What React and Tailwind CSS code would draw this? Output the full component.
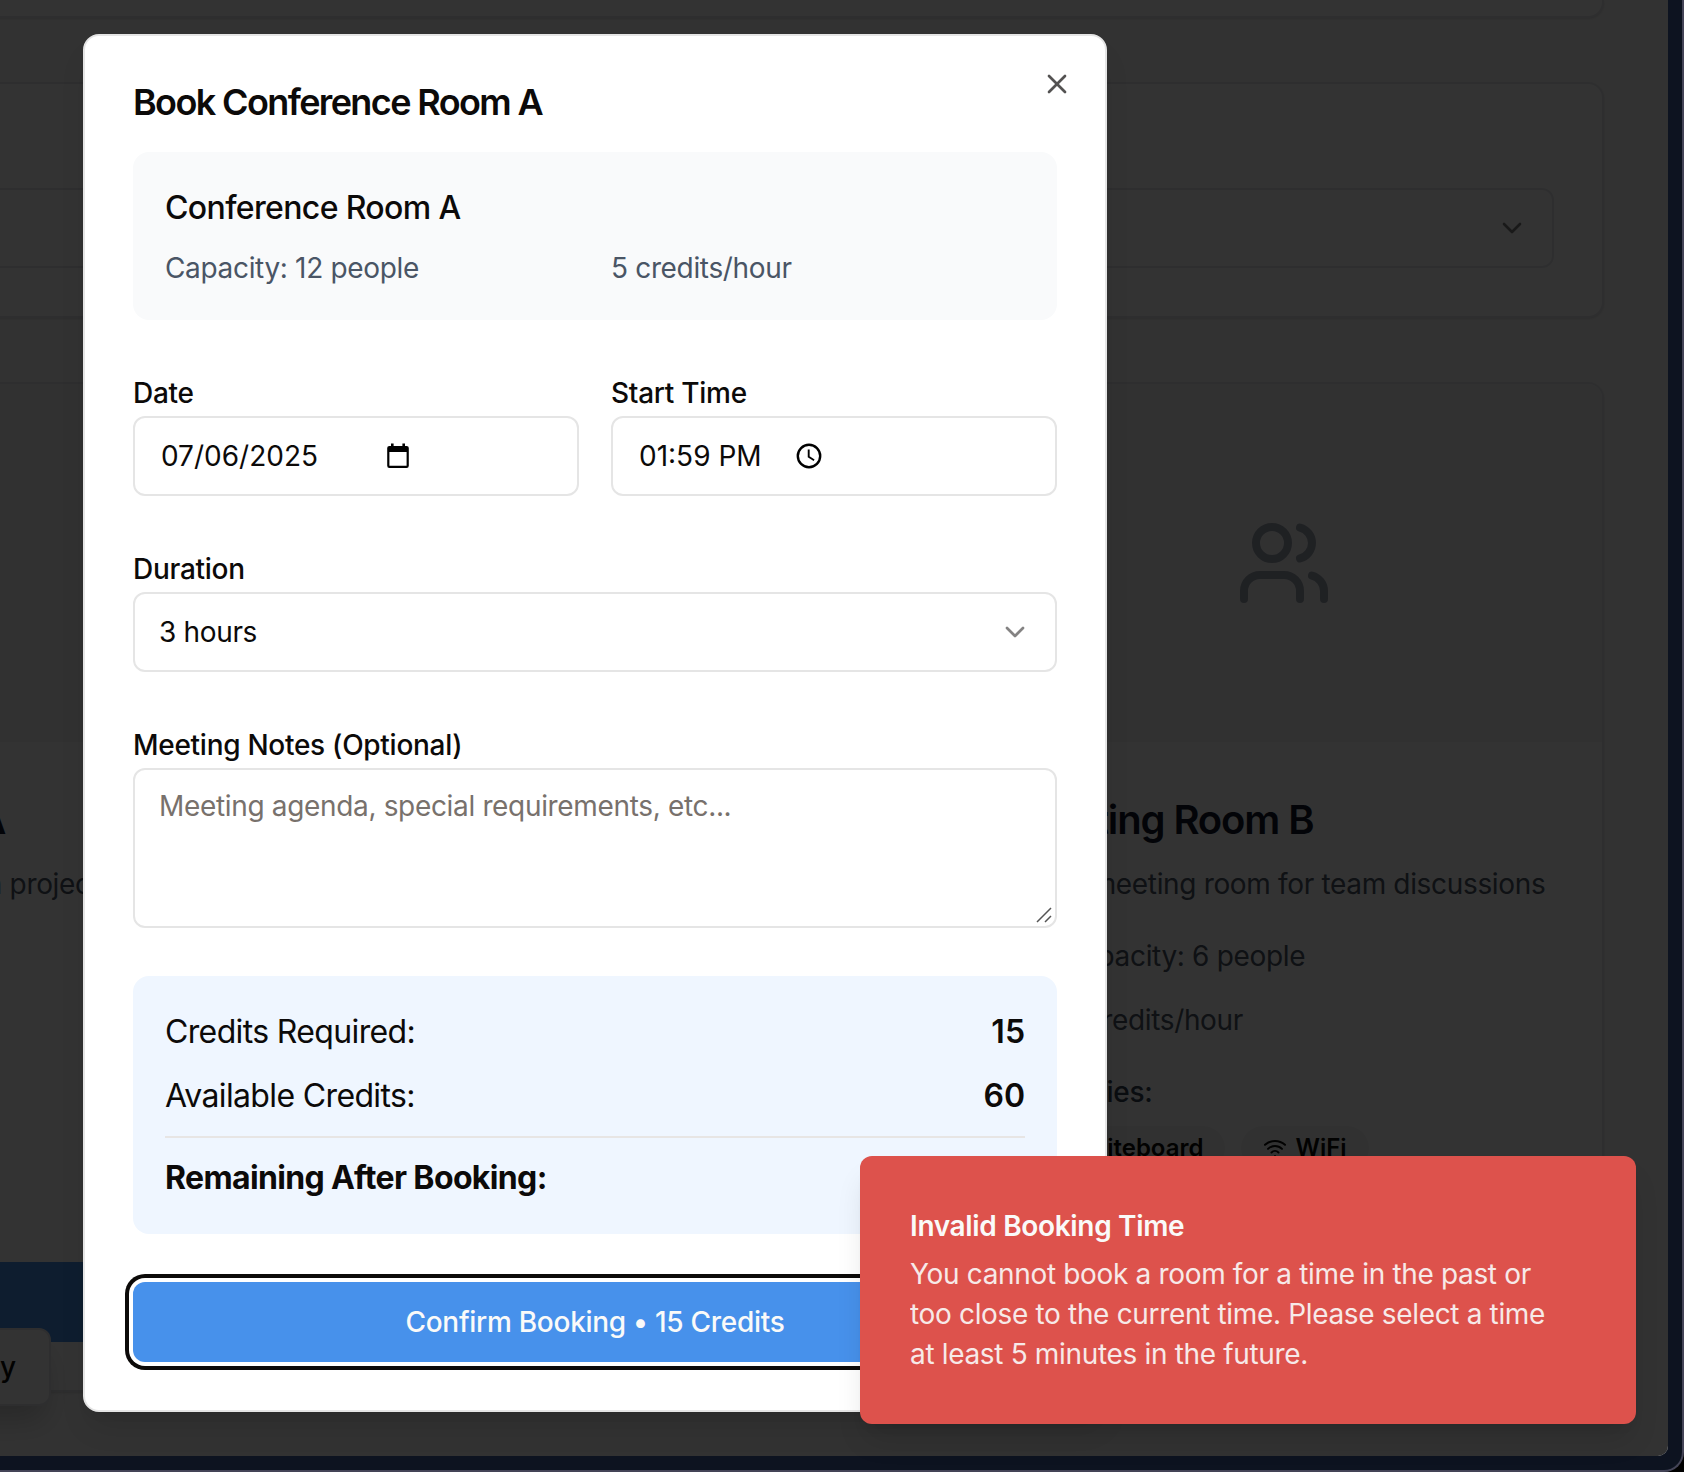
import React from "react";
import { ChevronDown, Coins, Presentation, Users, Wifi, X } from "lucide-react";

function CalendarIcon() {
  return (
    <svg width="28" height="28" viewBox="0 0 28 28" className="text-black">
      <path d="M7 1.5h2.6v2.4h8.8V1.5H21v2.4h1.6a2.2 2.2 0 0 1 2.2 2.2v17.6a2.2 2.2 0 0 1-2.2 2.2H5.4a2.2 2.2 0 0 1-2.2-2.2V6.1a2.2 2.2 0 0 1 2.2-2.2H7zM5.4 10v13.7h17.2V10z" fill="currentColor" fillRule="evenodd" />
    </svg>
  );
}

function ClockIcon() {
  return (
    <svg width="28" height="28" viewBox="0 0 28 28" fill="none" stroke="#000">
      <circle cx="14" cy="14" r="11.2" strokeWidth="2.4" />
      <path d="M13.7 7.6v7.2l5.4 3.4" strokeWidth="1.9" />
    </svg>
  );
}

function Badge({ icon: Icon, label }) {
  return (
    <span className="flex h-11 items-center gap-2 rounded-full border-2 border-transparent bg-[#f5f5f4] px-5 text-2xl font-semibold text-[#0c0a09]">
      <Icon size={24} />
      {label}
    </span>
  );
}

function RoomCard({ title, text, capacity, rate }) {
  return (
    <div className="flex h-[1010px] w-[640px] shrink-0 flex-col overflow-hidden rounded-2xl border-2 border-[#e5e7eb] bg-white shadow-sm">
      <div className="flex h-[358px] items-center justify-center bg-[#f3f4f6]">
        <Users size={96} className="text-[#9ca3af]" />
      </div>
      <div className="flex flex-1 flex-col px-12 pt-[50px] pb-12">
        <h3 className="text-[40px] leading-[56px] font-semibold tracking-[-0.028em] whitespace-nowrap text-[#0f172a]">{title}</h3>
        <p className="mt-4 text-[28px] leading-10 tracking-[-0.012em] whitespace-nowrap text-gray-600">{text}</p>
        <div className="mt-8 flex items-center gap-4 text-[28px] leading-10 tracking-[-0.012em] text-gray-600">
          <Users size={32} />
          {capacity}
        </div>
        <div className="mt-6 flex items-center gap-4 text-[28px] leading-10 tracking-[-0.012em] text-gray-600">
          <Coins size={32} />
          {rate}
        </div>
        <p className="mt-8 text-[28px] leading-10 font-medium tracking-[-0.012em] text-gray-700">Amenities:</p>
        <div className="mt-[14px] flex gap-4">
          <Badge icon={Presentation} label="Whiteboard" />
          <Badge icon={Wifi} label="WiFi" />
        </div>
        <div className="mt-auto h-20 bg-[#4791eb]" />
      </div>
    </div>
  );
}

function Page() {
  return (
    <div className="relative h-[1456px] w-[1668px] overflow-hidden rounded-br-[10px] bg-[#fafafa]">
      <div className="-ml-[412px] flex w-[2016px] flex-col gap-16">
        <div className="h-[18px] rounded-b-2xl border-2 border-t-0 border-[#e5e7eb] bg-white shadow-sm" />
        <div className="h-[236px] rounded-2xl border-2 border-[#e5e7eb] bg-white px-12 pt-[104px] shadow-sm">
          <div className="flex h-20 items-center justify-end rounded-xl border-2 border-[#e5e7eb] px-6">
            <ChevronDown size={32} className="text-black opacity-50" />
          </div>
        </div>
        <div className="flex gap-12">
          <RoomCard title="Conference Room A" text="Large conference room with projector" capacity="Capacity: 12 people" rate="5 credits/hour" />
          <RoomCard title="Phone Booth" text="Private booth for calls" capacity="Capacity: 1 people" rate="1 credits/hour" />
          <RoomCard title="Meeting Room B" text="Small meeting room for team discussions" capacity="Capacity: 6 people" rate="3 credits/hour" />
        </div>
      </div>
      <div className="absolute top-[1328px] right-[1617px] flex h-[78px] w-[260px] items-center justify-end rounded-xl border-2 border-[#e5e7eb] bg-white pr-[33px] text-[28px] font-medium text-[#0c0a09] shadow-[0_20px_30px_-6px_rgba(0,0,0,0.2)]">
        History
      </div>
      <div className="absolute inset-0 bg-black/80" />
    </div>
  );
}

function Field({ label, children }) {
  return (
    <div className="text-[32px] leading-[48px]">
      <div className="h-12">
        <label className="text-[28px] font-medium tracking-[-0.01em]">{label}</label>
      </div>
      {children}
    </div>
  );
}

const box = "flex h-20 items-center rounded-xl border-2 border-[#e5e5e5] px-6 text-[28px] leading-10";

function BookingDialog() {
  return (
    <div className="absolute top-[34px] left-[83px] flex h-[1378px] w-[1024px] flex-col rounded-2xl border-2 border-[#e5e5e5] bg-white p-12 text-[#0c0a09] shadow-[0_20px_30px_-6px_rgba(0,0,0,0.1),0_8px_12px_-8px_rgba(0,0,0,0.1)]">
      <X size={32} strokeWidth={2} className="absolute top-8 right-8 opacity-70" />
      <h2 className="text-4xl leading-9 font-semibold tracking-[-0.045em]">Book Conference Room A</h2>
      <div className="mt-8 rounded-2xl bg-gray-50 p-8">
        <h3 className="text-[32px] leading-[48px] font-medium tracking-[-0.02em]">Conference Room A</h3>
        <div className="mt-4 grid grid-cols-2 gap-8 text-[28px] leading-10 tracking-[-0.012em] text-gray-600">
          <span>Capacity: 12 people</span>
          <span>5 credits/hour</span>
        </div>
      </div>
      <div className="mt-12 flex flex-col gap-12">
        <div className="grid grid-cols-2 gap-8">
          <Field label="Date">
            <div className={box}>
              <span className="w-[225px] pl-[2px]">07/06/2025</span>
              <CalendarIcon />
            </div>
          </Field>
          <Field label="Start Time">
            <div className={box}>
              <span className="w-[158px] pl-[2px]">01:59 PM</span>
              <ClockIcon />
            </div>
          </Field>
        </div>
        <Field label="Duration">
          <div className={box + " justify-between"}>
            <span className="tracking-[-0.012em]">3 hours</span>
            <ChevronDown size={32} className="opacity-50" />
          </div>
        </Field>
        <Field label="Meeting Notes (Optional)">
          <div className="relative h-40 rounded-xl border-2 border-[#e5e5e5] px-6 py-4 text-[28px] leading-10 tracking-[-0.012em] text-[#78716c]">
            Meeting agenda, special requirements, etc...
            <svg width="18" height="18" viewBox="0 0 18 18" className="absolute right-0.5 bottom-0.5" stroke="#555" strokeWidth="1.5">
              <path d="M2 16 16 2M10 16l6-6" />
            </svg>
          </div>
        </Field>
      </div>
      <div className="mt-12 rounded-2xl bg-[#eff6ff] p-8 text-[32px] leading-[48px]">
        <div className="flex justify-between">
          <span className="tracking-[-0.02em]">Credits Required:</span>
          <span className="font-semibold">15</span>
        </div>
        <div className="mt-4 flex justify-between">
          <span className="tracking-[-0.02em]">Available Credits:</span>
          <span className="font-semibold">60</span>
        </div>
        <div className="mt-4 flex justify-between border-t-2 border-[#e7e5e4] pt-4 font-bold">
          <span className="tracking-[-0.02em]">Remaining After Booking:</span>
          <span>45</span>
        </div>
      </div>
      <button className="mt-12 h-20 shrink-0 rounded-xl bg-[#4791eb] text-[28px] font-medium tracking-[-0.01em] text-[#fafaf9] ring-4 ring-[#0c0a09] ring-offset-4 ring-offset-white">
        Confirm Booking • 15 Credits
      </button>
    </div>
  );
}

function Toast() {
  return (
    <div className="absolute top-[1156px] left-[860px] flex h-[268px] w-[776px] flex-col gap-2 rounded-xl bg-[#dd524c] p-[50px] text-[28px] leading-10 text-[#fafaf9] shadow-[0_20px_30px_-6px_rgba(0,0,0,0.12),0_8px_12px_-8px_rgba(0,0,0,0.12)]">
      <div className="font-semibold tracking-[-0.012em]">Invalid Booking Time</div>
      <div className="tracking-[-0.012em] whitespace-nowrap opacity-90">
        You cannot book a room for a time in the past or
        <br />
        too close to the current time. Please select a time
        <br />
        at least 5 minutes in the future.
      </div>
    </div>
  );
}

export default function App() {
  return (
    <div className="h-[1472px] w-[1684px] overflow-hidden bg-black font-['Inter',sans-serif]">
      <div className="relative h-[1472px] w-[1684px] overflow-hidden rounded-br-[20px] border-r-2 border-b-2 border-[#444457] bg-[#0d1320]">
        <Page />
        <BookingDialog />
        <Toast />
      </div>
    </div>
  );
}
